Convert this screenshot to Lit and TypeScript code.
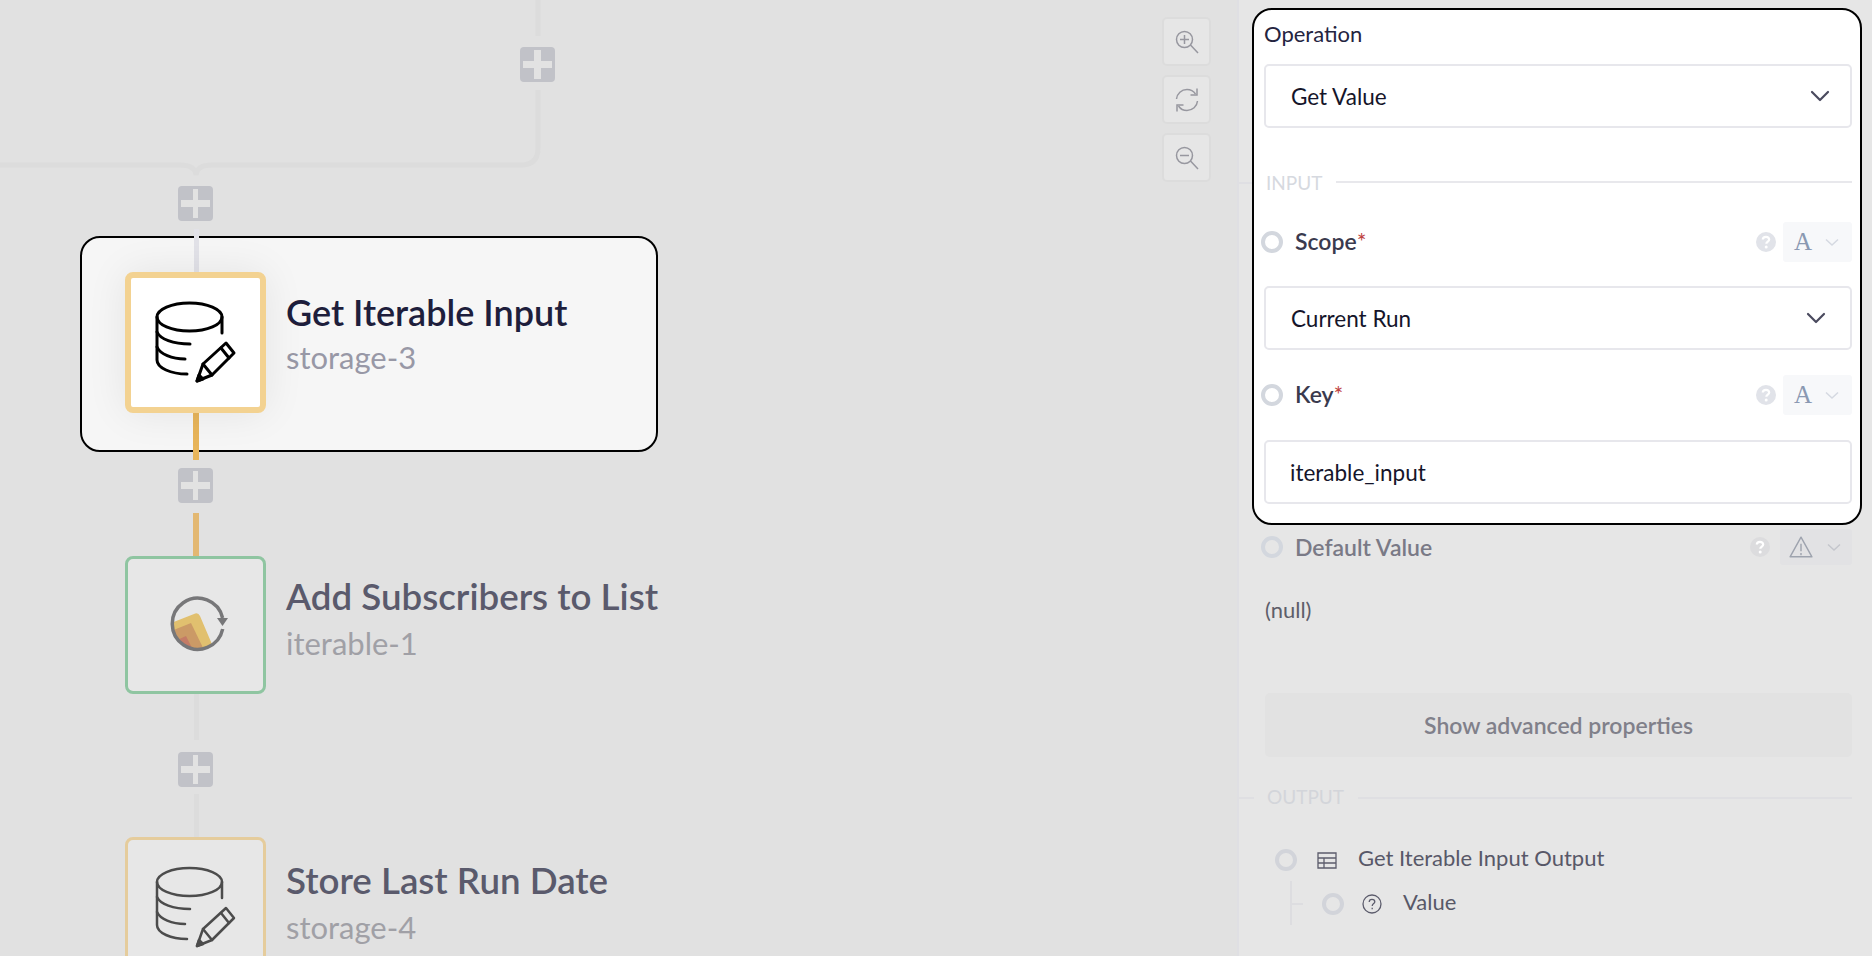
import { LitElement, html, css, svg } from 'lit';
import { customElement } from 'lit/decorators.js';
import { classMap } from 'lit/directives/class-map.js';

const FONT = css`"Lato", "Open Sans", "Liberation Sans", sans-serif`;

// nodes of the workflow diagram
const NODES = [
  { top: 272, labelTop: 18, title: 'Get Iterable Input', sub: 'storage-3', kind: 'storage', active: true },
  { top: 556, labelTop: 18, title: 'Add Subscribers to List', sub: 'iterable-1', kind: 'iterable', active: false },
  { top: 837, labelTop: 21, title: 'Store Last Run Date', sub: 'storage-4', kind: 'storage', active: false },
];

const PLUSES = [
  { x: 520, y: 47, thick: true },
  { x: 178, y: 186, thick: false },
  { x: 178, y: 468, thick: false },
  { x: 178, y: 752, thick: false },
];

const storageIcon = (stroke: string, width: number) => html`
  <svg class="glyph" viewBox="0 0 141 141" fill="none" stroke=${stroke} stroke-width=${width} stroke-linecap="round" stroke-linejoin="round">
    <ellipse cx="64.5" cy="45" rx="32.5" ry="14"></ellipse>
    <path d="M97 45V61"></path>
    <path d="M32 45V88C32 96 46 102 62 102"></path>
    <path d="M32 60C35 67 48 72 65 72"></path>
    <path d="M32 75C35 82 47 87 60 87"></path>
    <path d="M72 109L78 92L101 71L109 81L87 103Z"></path>
    <path d="M96 76L104 86M78 92L87 103"></path>
    <path d="M72 109L74 103L78 107Z" fill=${stroke}></path>
  </svg>
`;

const iterableIcon = () => html`
  <svg class="glyph" viewBox="0 0 141 141" fill="none">
    <defs>
      <clipPath id="ring"><circle cx="73" cy="68" r="25"></circle></clipPath>
    </defs>
    <g clip-path="url(#ring)">
      <path d="M46 67L69 58Q73 56 75 60L92 100H46Z" fill="#e1c06f"></path>
      <path d="M46 75L66 67L82 100H46Z" fill="#cb9a66"></path>
      <path d="M50 85L61 80L71 100H50Z" fill="#c47b66"></path>
    </g>
    <path d="M97.700 73A25.500 25.500 0 1 1 97.600 62" stroke="#777779" stroke-width="3.500"></path>
    <path d="M92 62H103L97.500 70Z" fill="#777779"></path>
  </svg>
`;

const chevron = () => html`
  <svg class="chev" viewBox="0 0 20 12" fill="none" stroke="#4a4a5e" stroke-width="2.200" stroke-linecap="round" stroke-linejoin="round">
    <path d="M2 2L10 10L18 2"></path>
  </svg>
`;

const smallChevron = (stroke: string) => html`
  <svg class="mini-chev" viewBox="0 0 16 9" fill="none" stroke=${stroke} stroke-width="1.500">
    <path d="M2 1.500L8 7L14 1.500"></path>
  </svg>
`;

const helpDot = () => html`
  <svg class="help" viewBox="0 0 20 20">
    <circle cx="10" cy="10" r="10" fill="currentColor"></circle>
    <path d="M6.800 7.600C6.800 5.800 8.200 4.800 10 4.800C11.900 4.800 13.200 5.900 13.200 7.400C13.200 9.500 10.300 9.600 10.300 11.800" fill="none" stroke="var(--help-ink)" stroke-width="2.200"></path>
    <circle cx="10.200" cy="15" r="1.500" fill="var(--help-ink)"></circle>
  </svg>
`;

@customElement('app-root')
export class AppRoot extends LitElement {
  static styles = css`
    :host {
      display: block;
      width: 1872px;
      height: 956px;
      overflow: hidden;
      font-family: ${FONT};
    }

    .page {
      display: flex;
      height: 956px;
    }

    /* free canvas with the workflow */
    .canvas {
      position: relative;
      flex: 1;
      overflow: hidden;
      background: #e1e1e1;
    }

    .wires {
      position: absolute;
      inset: 0;
      z-index: 1;
    }

    .selection {
      position: absolute;
      left: 80px;
      top: 236px;
      width: 578px;
      height: 216px;
      box-sizing: border-box;
      background: #f6f6f6;
      border: 2px solid #000;
      border-radius: 20px;
    }

    .plus {
      position: absolute;
      z-index: 2;
      width: 35px;
      height: 35px;
      border-radius: 4px;
      background: #c1c2c8;
    }

    .plus::before,
    .plus::after {
      content: '';
      position: absolute;
      background: #e2e2e2;
    }

    .plus::before {
      left: 3px;
      right: 3px;
      top: 14px;
      height: 7px;
    }

    .plus::after {
      top: 3px;
      bottom: 3px;
      left: 15px;
      width: 5px;
    }

    .plus.thick::after {
      left: 14px;
      width: 7px;
    }

    .node {
      position: absolute;
      z-index: 2;
      left: 125px;
      display: flex;
      gap: 20px;
    }

    .box {
      width: 141px;
      height: 141px;
      flex: none;
      box-sizing: border-box;
      border-radius: 8px;
      background: #e7e7e7;
      position: relative;
    }

    .box.storage {
      border: 3px solid #e5cc9c;
    }

    .box.iterable {
      height: 138px;
      border: 3px solid #8fc5a1;
    }

    .box.active {
      border: 6px solid #f3d291;
      background: #fff;
      box-shadow: 0 0 40px rgba(0, 0, 0, 0.08);
    }

    .glyph {
      position: absolute;
      left: -3px;
      top: -3px;
      width: 141px;
      height: 141px;
    }

    .box.active .glyph {
      left: -6px;
      top: -6px;
    }

    .label {
      white-space: nowrap;
    }

    .title {
      font-size: 36.7px;
      line-height: 44px;
      font-weight: 600;
      color: #5a5a6c;
    }

    .sub {
      margin-top: 5px;
      font-size: 31px;
      line-height: 40px;
      color: #a0a0a6;
    }

    .active-label .title {
      font-size: 36px;
      color: #1e1e3c;
    }

    .active-label .sub {
      margin-top: 3px;
      color: #9898a6;
    }

    .zoom-bar {
      position: absolute;
      z-index: 2;
      left: 1162px;
      top: 17px;
      display: flex;
      flex-direction: column;
      gap: 9px;
    }

    .zoom-btn {
      width: 49px;
      height: 49px;
      box-sizing: border-box;
      display: flex;
      align-items: center;
      justify-content: center;
      background: #e6e6e6;
      border: 2px solid #dcdcdc;
      border-radius: 5px;
    }

    .zoom-btn svg {
      width: 24px;
      height: 24px;
    }

    /* side panel */
    .panel {
      position: relative;
      width: 635px;
      flex: none;
      box-sizing: border-box;
      background: #e6e6e6;
      border-left: 2px solid #dfdfe3;
      padding: 8px 10px 0 13px;
    }

    .focus {
      position: relative;
      box-sizing: border-box;
      height: 517px;
      background: #fff;
      border: 2px solid #000;
      border-radius: 20px;
      padding: 10px 8px 0 10px;
    }

    .tick {
      position: absolute;
      left: -15px;
      top: 172px;
      width: 13px;
      height: 2px;
      background: #dfdfe3;
    }

    .op-label {
      font-size: 22px;
      line-height: 28px;
      color: #24243f;
    }

    .field {
      height: 64px;
      box-sizing: border-box;
      display: flex;
      align-items: center;
      justify-content: space-between;
      border: 2px solid #e7e7ec;
      border-radius: 5px;
      padding: 0 20px 0 25px;
      font-size: 22.5px;
      color: #15152a;
      background: #fff;
    }

    .op-select {
      margin-top: 16px;
    }

    .chev {
      width: 20px;
      height: 12px;
    }

    .section {
      display: flex;
      align-items: center;
      gap: 14px;
      height: 24px;
      padding-left: 2px;
      font-size: 19px;
      color: #d6d9df;
    }

    .section i {
      flex: 1;
      height: 2px;
      background: #e8e8ec;
    }

    .input-head {
      margin-top: 42px;
    }

    .row {
      display: flex;
      align-items: center;
      height: 40px;
      --help-ink: #fff;
    }

    .ring {
      width: 22px;
      height: 22px;
      flex: none;
      box-sizing: border-box;
      border: 4px solid #d3d7de;
      border-radius: 50%;
    }

    .row .ring {
      margin-left: -3px;
    }

    .name {
      margin: 0 0 3px 12px;
      flex: 1;
      font-size: 23px;
      font-weight: 600;
      color: #3a3a4e;
    }

    .name b {
      font-weight: 400;
      color: #c0443f;
    }

    .help {
      width: 20px;
      height: 20px;
      flex: none;
      color: #e1e3e9;
    }

    .type {
      width: 69px;
      height: 40px;
      margin-left: 7px;
      flex: none;
      display: flex;
      align-items: center;
      gap: 12px;
      padding-left: 11px;
      box-sizing: border-box;
      background: #f7f8fa;
      border-radius: 3px;
      font-family: "Liberation Serif", serif;
      font-size: 25px;
      color: #8a99b2;
    }

    .mini-chev {
      width: 16px;
      height: 9px;
    }

    .scope-row {
      margin-top: 28px;
    }

    .scope-field {
      margin-top: 24px;
      padding-right: 24px;
    }

    .key-row {
      margin-top: 25px;
    }

    .key-field {
      margin-top: 25px;
      padding-left: 24px;
    }

    .rest {
      padding: 4px 10px 0 13px;
      --help-ink: #e6e6e6;
    }

    .rest .row {
      height: 36px;
    }

    .rest .ring {
      margin-left: -4px;
    }

    .rest .name {
      margin-bottom: 1px;
      color: #7a7a86;
    }

    .rest .help {
      color: #dcdcde;
    }

    .rest .type {
      width: 72px;
      height: 36px;
      margin-left: 10px;
      background: #e2e2e4;
      padding-left: 9px;
      gap: 13px;
    }

    .rest .type svg.warn {
      width: 24px;
      height: 24px;
    }

    .null {
      margin-top: 32px;
      font-size: 22px;
      line-height: 26px;
      color: #5e5e6a;
    }

    .advanced {
      margin-top: 70px;
      height: 64px;
      display: flex;
      align-items: center;
      justify-content: center;
      border-radius: 5px;
      background: #e2e2e2;
      font-size: 23px;
      font-weight: 600;
      color: #80808a;
    }

    .out-head {
      position: relative;
      margin-top: 27px;
      color: #d3d5da;
    }

    .out-head i {
      margin-top: 3px;
      background: #dfdfe2;
    }

    .out-head .tick {
      left: -28px;
      top: 13px;
      background: #dfdfe2;
      width: 17px;
    }

    .tree {
      position: relative;
      margin-top: 41px;
      padding-left: 14px;
      display: flex;
      flex-direction: column;
      gap: 22px;
      font-size: 22px;
      color: #585868;
    }

    .leaf {
      display: flex;
      align-items: center;
      height: 22px;
    }

    .leaf .ring {
      border-color: #d2d4da;
    }

    .leaf-icon {
      width: 20px;
      height: 20px;
      flex: none;
      margin-left: 20px;
      margin-right: 21px;
    }

    .leaf-text {
      margin-bottom: 6px;
    }

    .leaf.child {
      margin-left: 47px;
    }

    .leaf.child .leaf-icon {
      margin-left: 18px;
    }

    .branch {
      position: absolute;
      left: 25px;
      top: 32px;
      width: 11px;
      height: 44px;
      box-sizing: border-box;
      border-left: 2px solid #dddde0;
    }

    .branch::after {
      content: '';
      position: absolute;
      left: 0;
      top: 22px;
      width: 11px;
      height: 2px;
      background: #dddde0;
    }
  `;

  private wires() {
    const grey = '#dcdcdc';
    return html`
      <svg class="wires" width="1235" height="956" fill="none">
        ${svg`
          <path d="M538 0V36M538 90V148Q538 165 521 165H212Q197 165 196 175Q195 165 180 165H0" stroke=${grey} stroke-width="5"></path>
          <path d="M196.500 229V272" stroke="#e2e2e8" stroke-width="5"></path>
          <path d="M196 413V460" stroke="#e8b55a" stroke-width="6"></path>
          <path d="M196 513V556" stroke="#e3b872" stroke-width="6"></path>
          <path d="M196.500 694V740M196.500 794V837" stroke=${grey} stroke-width="5"></path>
        `}
      </svg>
    `;
  }

  private zoomBar() {
    const ink = '#97979f';
    return html`
      <div class="zoom-bar">
        <div class="zoom-btn">
          <svg viewBox="0 0 24 24" fill="none" stroke=${ink} stroke-width="1.500">
            <circle cx="9.500" cy="9.500" r="8"></circle>
            <path d="M15.500 15L23 23M9.500 5V14M5 9.500H14"></path>
          </svg>
        </div>
        <div class="zoom-btn">
          <svg viewBox="0 0 24 24" fill="none" stroke=${ink} stroke-width="1.500">
            <path d="M1.500 11C2 5.500 6.500 1.500 12 1.500C15.500 1.500 18.500 3 20.500 6"></path>
            <path d="M22.500 13C22 18.500 17.500 22.500 12 22.500C8.500 22.500 5.500 21 3.500 18"></path>
            <path d="M22 0.500V7H15.500M2 23.500V17H8.500"></path>
          </svg>
        </div>
        <div class="zoom-btn">
          <svg viewBox="0 0 24 24" fill="none" stroke=${ink} stroke-width="1.500">
            <circle cx="9.500" cy="9.500" r="8"></circle>
            <path d="M15.500 15L23 23M5 9.500H14"></path>
          </svg>
        </div>
      </div>
    `;
  }

  private node(n: (typeof NODES)[number]) {
    const icon = n.kind === 'iterable'
      ? iterableIcon()
      : storageIcon(n.active ? '#000' : '#4c4c4c', n.active ? 3 : 2.5);
    return html`
      <div class="node" style="top:${n.top}px">
        <div class=${classMap({ box: true, [n.kind]: true, active: n.active })}>${icon}</div>
        <div class=${classMap({ label: true, 'active-label': n.active })} style="padding-top:${n.labelTop}px">
          <div class="title">${n.title}</div>
          <div class="sub">${n.sub}</div>
        </div>
      </div>
    `;
  }

  private canvas() {
    return html`
      <div class="canvas">
        <div class="selection"></div>
        ${this.wires()}
        ${PLUSES.map((p) => html`
          <div class=${classMap({ plus: true, thick: p.thick })} style="left:${p.x}px;top:${p.y}px"></div>
        `)}
        ${NODES.map((n) => this.node(n))}
        ${this.zoomBar()}
      </div>
    `;
  }

  private paramRow(name: string, cls: string) {
    return html`
      <div class="row ${cls}">
        <span class="ring"></span>
        <span class="name">${name}<b>*</b></span>
        ${helpDot()}
        <div class="type"><span>A</span>${smallChevron('#d5d9e1')}</div>
      </div>
    `;
  }

  private panel() {
    return html`
      <div class="panel">
        <div class="focus">
          <span class="tick"></span>
          <div class="op-label">Operation</div>
          <div class="field op-select">Get Value ${chevron()}</div>
          <div class="section input-head">INPUT <i></i></div>
          ${this.paramRow('Scope', 'scope-row')}
          <div class="field scope-field">Current Run ${chevron()}</div>
          ${this.paramRow('Key', 'key-row')}
          <div class="field key-field">iterable_input</div>
        </div>
        <div class="rest">
          <div class="row">
            <span class="ring"></span>
            <span class="name">Default Value</span>
            ${helpDot()}
            <div class="type">
              <svg class="warn" viewBox="0 0 22 22" fill="none" stroke="#9ea3ae" stroke-width="1.300" stroke-linejoin="round">
                <path d="M11 2L21 20H1Z"></path>
                <path d="M11 8V15M11 16.500V18.500"></path>
              </svg>
              ${smallChevron('#c4c6cc')}
            </div>
          </div>
          <div class="null">(null)</div>
          <div class="advanced">Show advanced properties</div>
          <div class="section out-head"><span class="tick"></span>OUTPUT <i></i></div>
          <div class="tree">
            <span class="branch"></span>
            <div class="leaf">
              <span class="ring"></span>
              <svg class="leaf-icon" viewBox="0 0 20 20" fill="none" stroke="#5c5c6c" stroke-width="1.300">
                <path d="M1 3H19V18H1ZM1 8H19M1 13H19M7 8V18"></path>
              </svg>
              <span class="leaf-text">Get Iterable Input Output</span>
            </div>
            <div class="leaf child">
              <span class="ring"></span>
              <svg class="leaf-icon" viewBox="0 0 20 20" fill="none" stroke="#5c5c6c" stroke-width="1.300">
                <circle cx="10" cy="10" r="9"></circle>
                <path d="M7.200 8C7.200 6.300 8.500 5.300 10 5.300C11.600 5.300 12.800 6.300 12.800 7.700C12.800 9.600 10.200 9.700 10.200 12"></path>
                <path d="M10.200 13.800V15.300"></path>
              </svg>
              <span class="leaf-text">Value</span>
            </div>
          </div>
        </div>
      </div>
    `;
  }

  render() {
    return html`<div class="page">${this.canvas()}${this.panel()}</div>`;
  }
}
